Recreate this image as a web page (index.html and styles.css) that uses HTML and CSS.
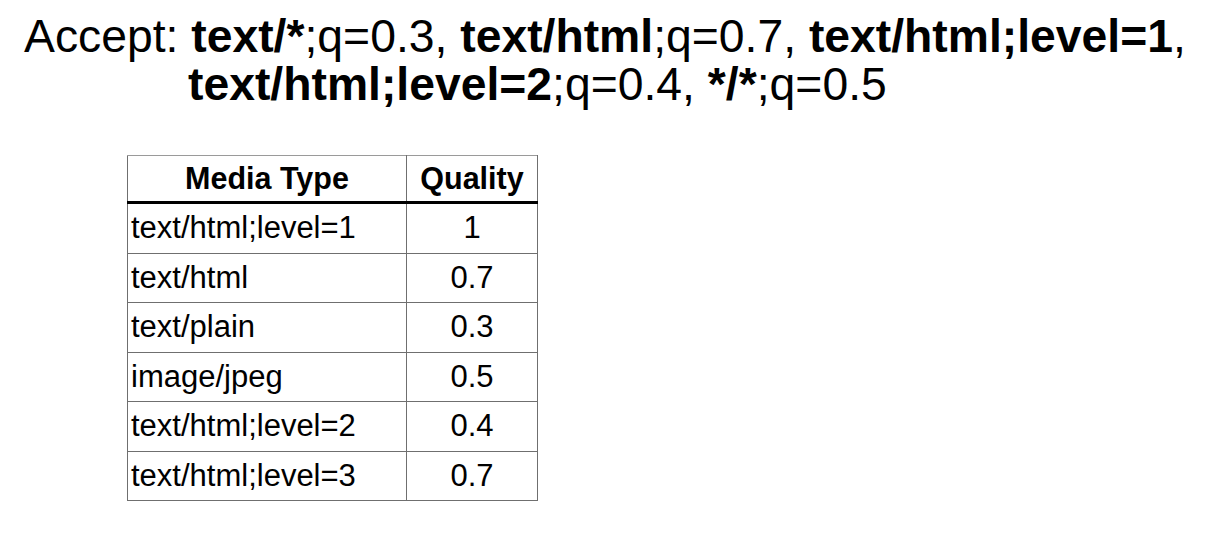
FILE: index.html
```html
<!DOCTYPE html>
<html>
<head>
<meta charset="utf-8">
<link rel="stylesheet" href="styles.css">
</head>
<body>
<div class="slide">
  <p class="accept">Accept: <b>text/*</b>;q=0.3, <b>text/html</b>;q=0.7, <b>text/html;level=1</b>, <b>text/html;level=2</b>;q=0.4, <b>*/*</b>;q=0.5</p>
  <table class="qtable">
    <thead>
      <tr><th class="c-type">Media Type</th><th class="c-q">Quality</th></tr>
    </thead>
    <tbody>
      <tr><td>text/html;level=1</td><td class="q">1</td></tr>
      <tr><td>text/html</td><td class="q">0.7</td></tr>
      <tr><td>text/plain</td><td class="q">0.3</td></tr>
      <tr><td>image/jpeg</td><td class="q">0.5</td></tr>
      <tr><td>text/html;level=2</td><td class="q">0.4</td></tr>
      <tr><td>text/html;level=3</td><td class="q">0.7</td></tr>
    </tbody>
  </table>
</div>
</body>
</html>
```
FILE: styles.css
```css
html, body {
  margin: 0;
  padding: 0;
  background: #fff;
}
body {
  font-family: "Liberation Sans", Arial, sans-serif;
  color: #000;
  width: 1230px;
  height: 538px;
  overflow: hidden;
}
.slide {
  padding: 12px 0 0 24px;
}
.accept {
  margin: 0;
  font-size: 46.3px;
  line-height: 48px;
  padding-left: 164px;
  text-indent: -164px;
  width: 1100px;
}
.accept b {
  font-weight: bold;
}
.qtable {
  margin: 47px 0 0 103px;
  border-collapse: collapse;
  border: 1px solid #6f6f6f;
  border-top-color: #9a9a9a;
}
.qtable th, .qtable td {
  border: 1px solid #6f6f6f;
  height: 48.5px;
  padding: 0 3px;
}
.qtable th {
  font-size: 30.5px;
  font-weight: bold;
  text-align: center;
  border-top-color: #9a9a9a;
  border-bottom: 3px solid #000;
  height: 45px;
}
.qtable td {
  font-size: 31px;
}
.c-type { width: 272px; }
.c-q { width: 124px; }
.qtable td.q {
  text-align: center;
}
```
